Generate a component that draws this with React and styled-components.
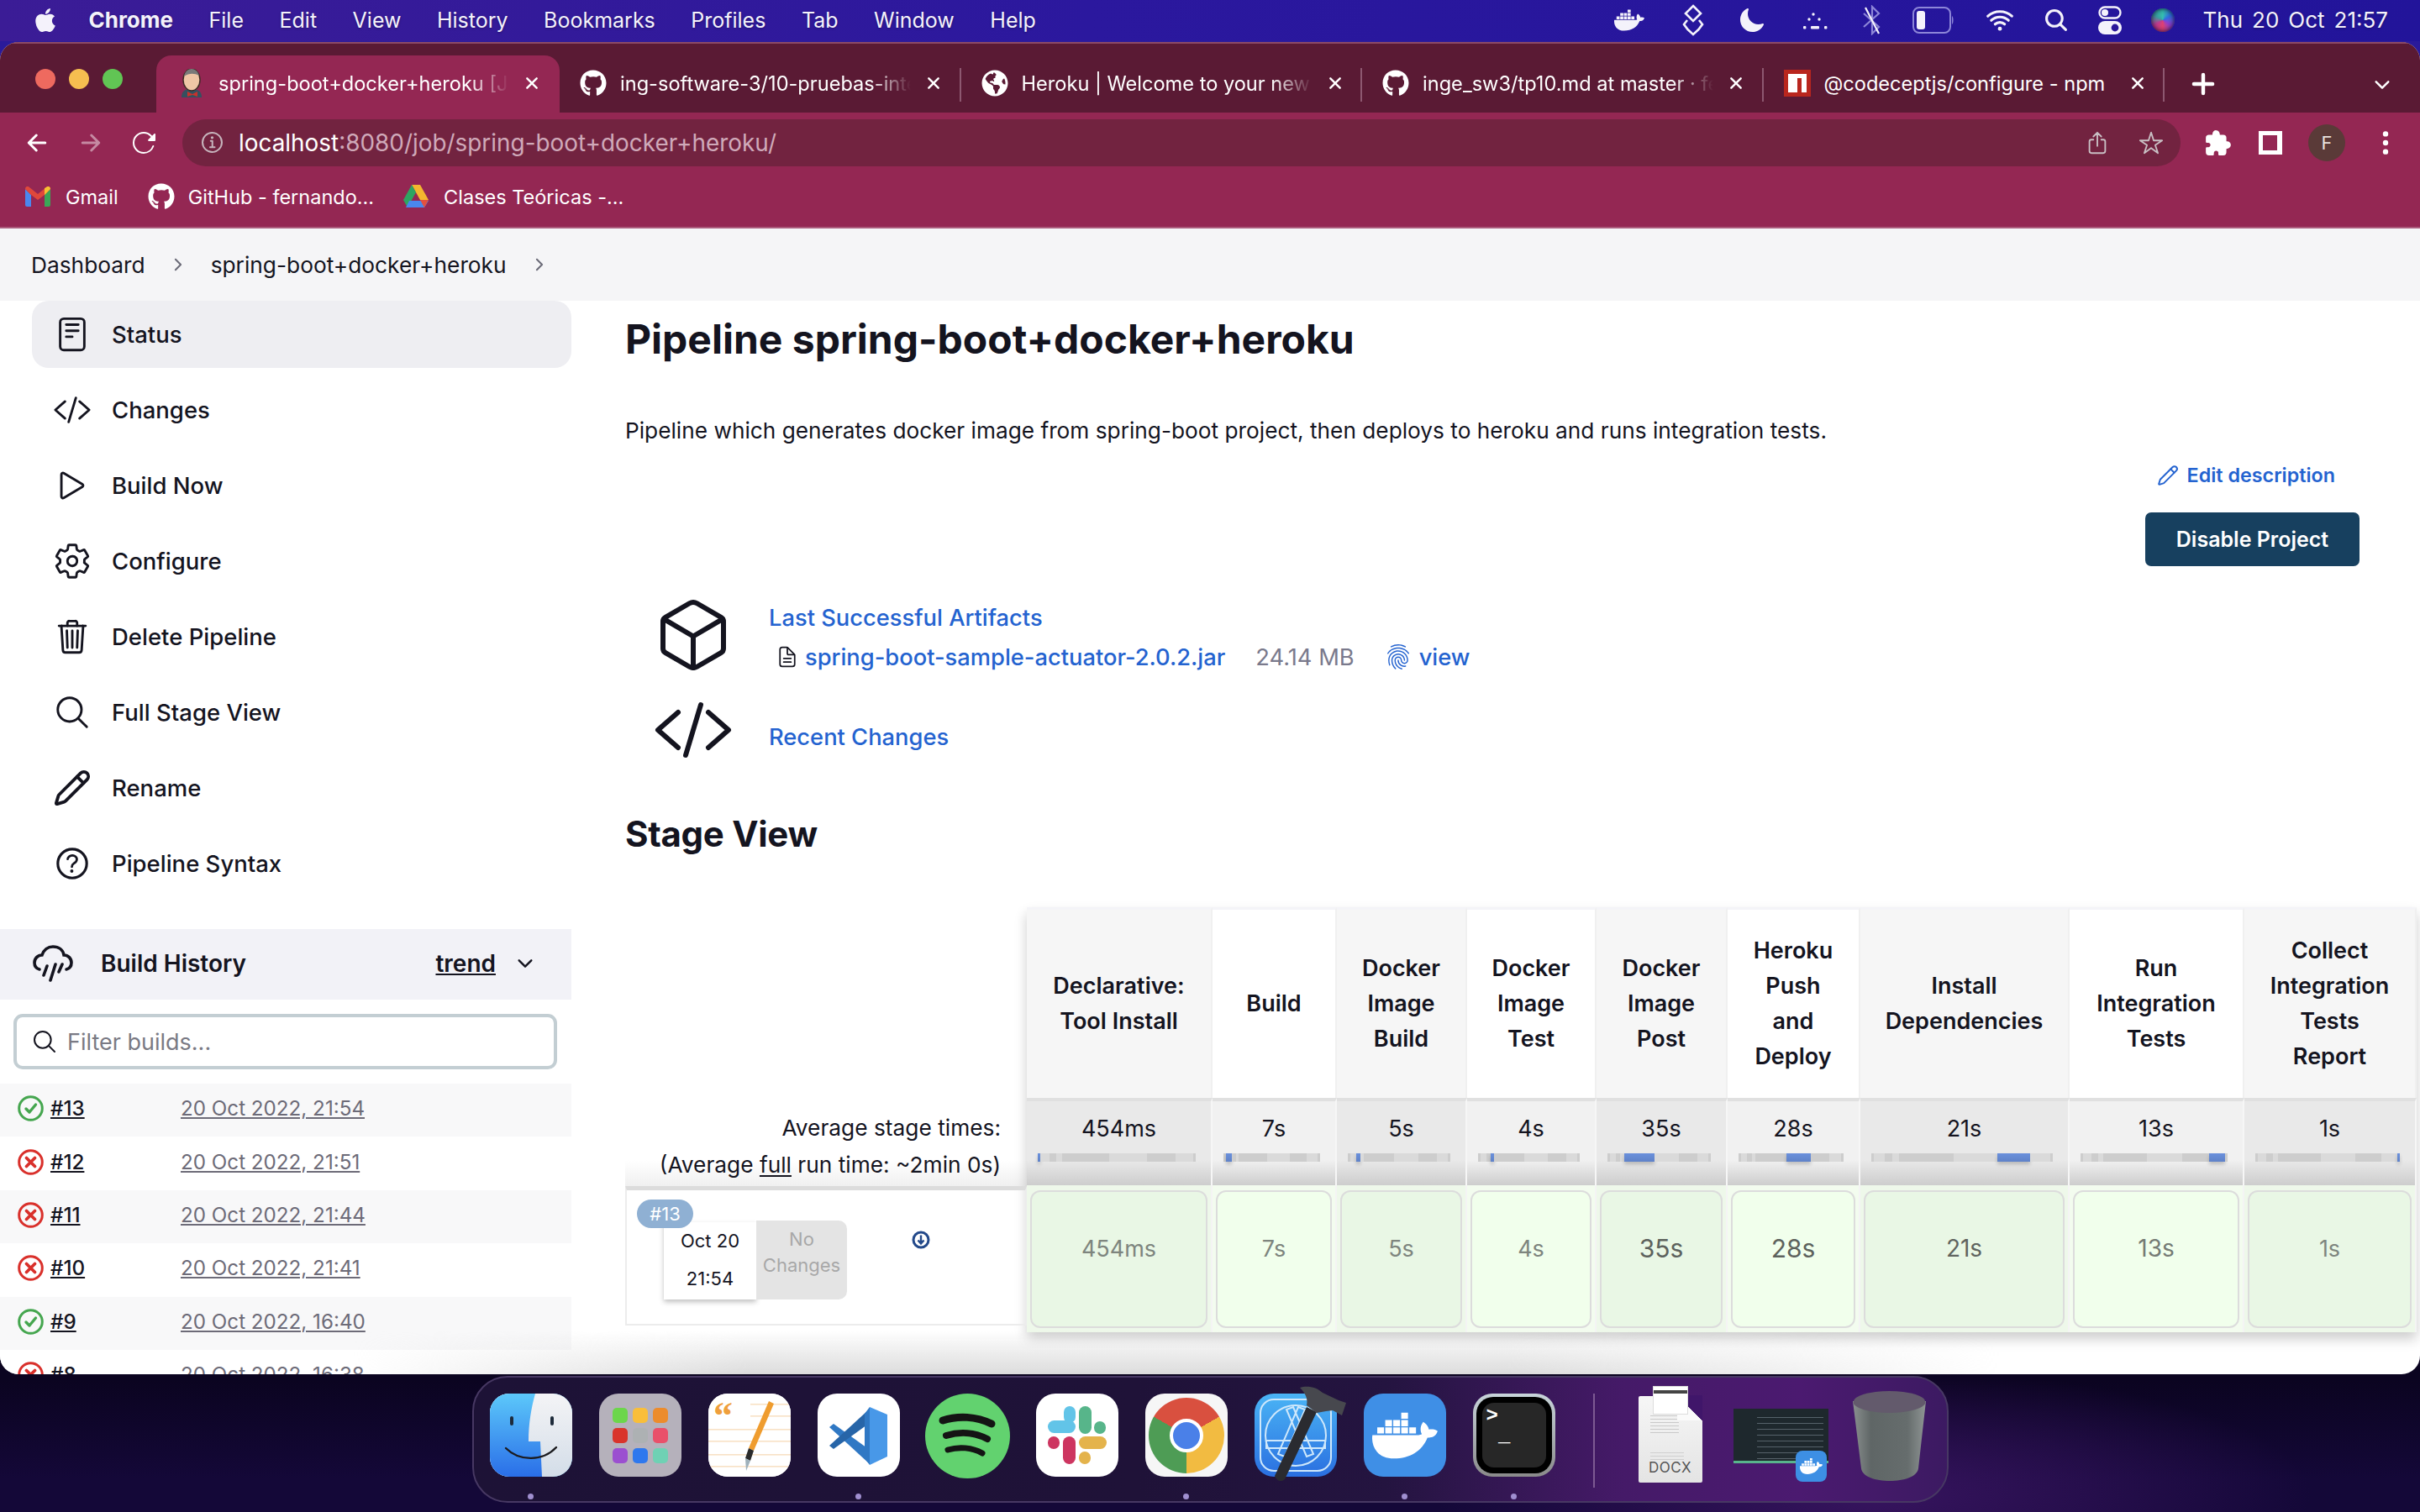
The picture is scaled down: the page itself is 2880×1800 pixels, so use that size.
import styled, { createGlobalStyle } from "styled-components";
import { Pencil, Plus } from "lucide-react";
import { FaApple, FaDocker, FaGithub, FaGlobeAmericas } from "react-icons/fa";
import {
  IoArrowBack, IoArrowForward, IoChevronDown, IoChevronForward, IoClose,
  IoCodeSlashOutline, IoCubeOutline, IoDocumentTextOutline, IoExtensionPuzzle, IoEllipsisVertical,
  IoFingerPrintOutline, IoHelpCircleOutline, IoInformationCircleOutline, IoMoon,
  IoPlayOutline, IoReaderOutline, IoReload, IoSearch, IoSearchOutline,
  IoSettingsOutline, IoShareOutline, IoStarOutline, IoTrashOutline, IoWifi,
} from "react-icons/io5";

const Global = createGlobalStyle`
  html, body { margin: 0; padding: 0; background: #0a0420; }
  * { box-sizing: border-box; }
  body { font-family: Inter, "Liberation Sans", sans-serif; }
`;

const Screen = styled.div`
  width: 2880px;
  height: 1800px;
  overflow: hidden;
  display: flex;
  flex-direction: column;
  background:
    linear-gradient(#2a1a9a 0 80px, transparent 80px),
    radial-gradient(520px 150px at 2230px 1780px, #37145f, transparent),
    linear-gradient(#0b0420 1640px, #140838 1760px);
`;

/* mac menu bar */
const MenuBar = styled.div`
  height: 49px;
  flex: none;
  display: flex;
  align-items: center;
  padding: 0 38px 2px 38px;
  color: #f4f2fb;
  background: linear-gradient(90deg, #3b1c96, #2b189e 45%, #22149a);
  font-size: 25px;
  text-shadow: 0 1px 3px rgba(0, 0, 0, 0.3);
`;
const MenuLeft = styled.div`
  display: flex;
  align-items: center;
  gap: 42.5px;
`;
const AppName = styled.span`
  font-weight: 700;
  margin-left: -7px;
  font-size: 26px;
`;
const MenuRight = styled.div`
  margin-left: auto;
  display: flex;
  align-items: center;
`;
const StatusSlot = styled.span`
  display: flex;
  align-items: center;
  margin-left: ${(p) => p.$ml}px;
`;
const Clock = styled.span`
  white-space: nowrap;
  word-spacing: 3.7px;
  font-size: 26px;
  margin-left: 33px;
`;
const Siri = styled.span`
  width: 28px;
  height: 28px;
  margin-left: 35px;
  border-radius: 50%;
  background: conic-gradient(#35c2b0, #2f6fe0, #8d3fd0, #e0426f, #c03a90, #3aa0a0, #35c2b0);
  box-shadow: inset 0 0 6px #0c0a30;
`;

/* browser window */
const Window = styled.div`
  position: relative;
  height: 1586px;
  flex: none;
  margin-top: 1px;
  border-radius: 22px;
  overflow: hidden;
  display: flex;
  flex-direction: column;
  background: #fff;
  &::after {
    content: "";
    position: absolute;
    left: 420px;
    right: 500px;
    bottom: 0;
    height: 52px;
    background: linear-gradient(rgba(215, 215, 215, 0), #dcdcdc);
    mask-image: linear-gradient(90deg, transparent, #000 24%, #000 70%, transparent);
    pointer-events: none;
  }
`;
const TabStrip = styled.div`
  height: 84px;
  flex: none;
  display: flex;
  align-items: flex-end;
  background: #5a1a34;
  border-top: 2px solid #8c4a66;
  color: #fff;
`;
const Lights = styled.div`
  width: 186px;
  height: 100%;
  display: flex;
  gap: 16px;
  padding: 30px 0 0 42px;
`;
const Light = styled.span`
  width: 24px;
  height: 24px;
  border-radius: 50%;
  background: ${(p) => p.$color};
`;
const Tab = styled.div`
  position: relative;
  width: ${(p) => (p.$active ? "480px" : "477.5px")};
  height: 68px;
  display: flex;
  align-items: center;
  padding: 0 0 2px ${(p) => (p.$active ? "26px" : "24px")};
  background: ${(p) => (p.$active ? "#942753" : "transparent")};
  border-radius: 18px 18px 0 0;
  font-size: 23.6px;
  &::after {
    content: "";
    display: ${(p) => (p.$sep ? "block" : "none")};
    position: absolute;
    right: 0;
    top: 15px;
    height: 40px;
    width: 2px;
    background: #8d5870;
  }
`;
const TabIcon = styled.span`
  width: 32px;
  height: 32px;
  flex: none;
  display: flex;
  align-items: center;
  justify-content: center;
  font-size: 32px;
`;
const TabTitle = styled.span`
  flex: none;
  width: 346px;
  margin-left: 16px;
  white-space: nowrap;
  overflow: hidden;
  mask-image: ${(p) => (p.$fade ? "linear-gradient(90deg, #000 86%, transparent)" : "none")};
`;
const TabClose = styled.span`
  display: flex;
  margin-left: 14px;
  font-size: 26px;
`;
const NewTab = styled.span`
  display: flex;
  margin-left: 27px;
  margin-bottom: 15px;
`;
const TabMenu = styled.span`
  display: flex;
  margin-left: auto;
  margin-right: 32px;
  margin-bottom: 20px;
  font-size: 26px;
`;
const Toolbar = styled.div`
  height: 72px;
  flex: none;
  display: flex;
  align-items: flex-start;
  padding: 8px 24px 0 28px;
  background: #942753;
  color: #fff;
`;
const NavButton = styled.span`
  width: 32px;
  height: 56px;
  margin-right: 32px;
  display: flex;
  align-items: center;
  justify-content: center;
  font-size: 34px;
  color: ${(p) => (p.$dim ? "#c58aa2" : "#fff")};
`;
const AddressBar = styled.div`
  width: 2382px;
  height: 56px;
  margin-left: -3px;
  border-radius: 28px;
  background: #722340;
  display: flex;
  align-items: center;
  padding: 0 20px 0 20px;
  font-size: 27.9px;
  color: #cfa9b9;
`;
const SiteInfo = styled.span`
  display: flex;
  font-size: 32px;
  color: #c6b4bc;
  margin-right: 15px;
`;
const Host = styled.span`
  color: #fff;
`;
const AddressActions = styled.div`
  margin-left: auto;
  display: flex;
  align-items: center;
  gap: 34px;
  font-size: 30px;
  color: #c9c0c4;
`;
const ToolActions = styled.div`
  display: flex;
  align-items: center;
  height: 56px;
  margin-left: 28px;
  gap: 31px;
  font-size: 34px;
`;
const SidePanel = styled.span`
  width: 28px;
  height: 28px;
  border: 5px solid #fff;
  border-left-width: 5px;
  border-right-width: 6px;
`;
const Avatar = styled.span`
  width: 44px;
  height: 44px;
  border-radius: 50%;
  background: #5a3a38;
  color: #e8e0dc;
  font-size: 22px;
  display: flex;
  align-items: center;
  justify-content: center;
`;
const Bookmarks = styled.div`
  height: 66px;
  flex: none;
  display: flex;
  align-items: center;
  padding: 0 0 8px 30px;
  background: #942753;
  border-bottom: 2px solid #ab5c7c;
  color: #fff;
  font-size: 23.5px;
`;
const Bookmark = styled.span`
  display: flex;
  align-items: center;
  gap: ${(p) => p.$gap || 18}px;
  margin-right: ${(p) => p.$mr}px;
  svg { flex: none; }
`;

/* jenkins */
const Crumbs = styled.div`
  height: 86px;
  flex: none;
  display: flex;
  align-items: center;
  padding-left: 37px;
  background: #f5f5f7;
  color: #14141f;
  font-size: 26.3px;
`;
const CrumbArrow = styled.span`
  display: flex;
  margin: 0 28px;
  font-size: 22px;
  color: #6b6b78;
`;
const Body = styled.div`
  flex: 1;
  min-height: 0;
  display: flex;
`;
const Sidebar = styled.aside`
  width: 680px;
  flex: none;
  color: #14141f;
`;
const TaskList = styled.nav`
  display: flex;
  flex-direction: column;
  gap: 10px;
  padding-left: 38px;
  margin-bottom: 38px;
`;
const Task = styled.a`
  height: 80px;
  display: flex;
  align-items: center;
  gap: 24px;
  padding-left: 25px;
  border-radius: 20px;
  font-size: 27.5px;
  font-weight: 500;
  background: ${(p) => (p.$active ? "#eeeef2" : "transparent")};
  svg { flex: none; width: 46px; height: 46px; }
  &:last-child svg { width: 50px; height: 50px; margin: 0 -2px; }
`;
const HistoryHead = styled.div`
  height: 84px;
  display: flex;
  align-items: center;
  padding: 0 0 2px 39px;
  background: #f2f2f7;
  font-size: 28px;
  font-weight: 600;
  svg { flex: none; }
`;
const HistoryTitle = styled.span`
  margin-left: 33px;
`;
const Trend = styled.a`
  margin-left: auto;
  text-decoration: underline;
  margin-right: 22px;
`;
const HistoryToggle = styled.span`
  display: flex;
  margin-right: 42px;
`;
const FilterBox = styled.div`
  height: 66px;
  margin: 17px 17px 17px 16px;
  border: 4px solid #c3ced3;
  border-radius: 11px;
  display: flex;
  align-items: center;
  gap: 11px;
  padding-left: 17px;
  font-size: 27px;
  color: #7a7a84;
  svg { color: #14141f; }
`;
const BuildRow = styled.div`
  height: 63.4px;
  display: flex;
  align-items: center;
  padding: 0 0 4px 21px;
  background: ${(p) => (p.$odd ? "#f8f8f9" : "#fff")};
  font-size: 24.2px;
  svg { flex: none; }
`;
const BuildNum = styled.a`
  width: 155px;
  margin-left: 8px;
  font-weight: 500;
  text-decoration: underline;
`;
const BuildDate = styled.a`
  color: #6d6b78;
  text-decoration: underline;
`;
const Main = styled.main`
  flex: 1;
  min-width: 0;
  padding: 16px 72px 0 64px;
  display: flex;
  flex-direction: column;
  color: #14141f;
`;
const Title = styled.h1`
  margin: 0;
  font-size: 48px;
  line-height: 60px;
  font-weight: 700;
`;
const Description = styled.p`
  margin: 61px 0 0;
  font-size: 26.25px;
  line-height: 36px;
`;
const EditLink = styled.a`
  margin: 17px 29px 0 0;
  align-self: flex-end;
  display: flex;
  align-items: center;
  gap: 10px;
  font-size: 23.3px;
  line-height: 36px;
  font-weight: 600;
  color: #2463d0;
`;
const DisableButton = styled.button`
  align-self: flex-end;
  width: 255px;
  height: 64px;
  margin-top: 26px;
  border: 0;
  border-radius: 7px;
  background: #17405f;
  color: #fff;
  font: 600 25px Inter, sans-serif;
`;
const Links = styled.div`
  margin-top: 39px;
  display: grid;
  grid-template-columns: 96px 1fr;
  column-gap: 42px;
  margin-left: 33px;
`;
const BigIcon = styled.span`
  display: flex;
  align-items: center;
  justify-content: center;
  height: ${(p) => p.$h}px;
`;
const LinkStack = styled.div`
  display: flex;
  flex-direction: column;
  justify-content: ${(p) => (p.$center ? "flex-end" : "flex-start")};
  padding-bottom: ${(p) => (p.$center ? "35px" : "0")};
  font-size: 27.3px;
  font-weight: 500;
  color: #2463d0;
`;
const LinkLine = styled.div`
  height: 44px;
  display: flex;
  align-items: center;
`;
const FileLine = styled(LinkLine)`
  margin-top: 3px;
  padding-left: 8px;
`;
const FileName = styled.span`
  margin-left: 7px;
`;
const FileSize = styled.span`
  margin: 0 36px 0 36px;
  font-weight: 400;
  color: #7a7a8c;
`;
const ViewLink = styled.span`
  margin-left: 9px;
`;
const SectionTitle = styled.h2`
  margin: 31px 0 0;
  font-size: 42px;
  line-height: 56px;
  font-weight: 700;
  letter-spacing: -0.3px;
`;
const Stage = styled.section`
  margin: 59px -68px 0 0;
  display: flex;
`;
const StageLeft = styled.div`
  width: 478px;
  flex: none;
  padding-top: 228px;
`;
const Averages = styled.div`
  height: 104px;
  padding: 13px 31px 0 0;
  text-align: right;
  font-size: 26.3px;
  line-height: 44px;
  background: linear-gradient(#fff 70%, #f0f0f0);
`;
const FullRun = styled.u`
  text-underline-offset: 3px;
`;
const BuildBox = styled.div`
  height: 166px;
  border: 2px solid #ececec;
  border-top: 5px solid #dcdcdc;
  position: relative;
  display: flex;
  padding: 38px 0 0 44px;
`;
const BuildBadge = styled.span`
  position: absolute;
  left: 12px;
  top: 11px;
  width: 67px;
  height: 34px;
  border-radius: 17px;
  background: #8fb0d3;
  color: #fff;
  font-size: 22px;
  display: flex;
  align-items: center;
  justify-content: center;
`;
const DateCard = styled.div`
  width: 110px;
  height: 92px;
  background: #fff;
  box-shadow: 0 3px 6px rgba(0, 0, 0, 0.25);
  font-size: 22px;
  line-height: 45px;
  text-align: center;
`;
const NoChanges = styled.div`
  width: 108px;
  height: 94px;
  margin-top: -2px;
  padding-top: 7px;
  border-radius: 0 10px 10px 0;
  background: #e4e4e4;
  color: #a8a8a8;
  font-size: 22px;
  line-height: 31px;
  text-align: center;
`;
const DownIcon = styled.span`
  display: flex;
  margin: 10px 0 0 77px;
  height: 24px;
`;
const StageGrid = styled.div`
  flex: none;
  height: 506px;
  display: grid;
  grid-template-columns: ${(p) => p.$tracks};
  grid-template-rows: 227px 104px 175px;
  background: #f4f4f8;
  box-shadow: 0 8px 14px rgba(0, 0, 0, 0.2);
`;
const HeadCell = styled.div`
  display: flex;
  align-items: center;
  justify-content: center;
  text-align: center;
  white-space: pre-line;
  font-size: 27px;
  line-height: 42px;
  font-weight: 600;
  background: ${(p) => (p.$odd ? "#f6f6f6" : "#fff")};
  border-right: 2px solid #f0f0f0;
  border-top: 3px solid #f4f4f8;
`;
const AvgCell = styled.div`
  display: flex;
  flex-direction: column;
  align-items: center;
  padding: 14px 18px 0 13px;
  border-top: 4px solid #e0e0e0;
  border-right: 2px solid #f6f6f6;
  font-size: 27px;
  line-height: 38px;
  background: linear-gradient(${(p) => (p.$odd ? "#e9e9e9" : "#f1f1f1")} 70%, #cdcdcd);
`;
const AvgText = styled.span`
  margin-left: 5px;
`;
const MiniBar = styled.div`
  width: 100%;
  height: 10px;
  margin-top: 10px;
  display: flex;
  background: #d6d6d6;
`;
const MiniPart = styled.span`
  flex: ${(p) => p.$grow} 0 0;
  background: ${(p) => (p.$on ? "linear-gradient(#6a90dc, #5f82c8)" : p.$alt ? "#cdcdcd" : "#dadada")};
  box-shadow: ${(p) => (p.$on ? "0 3px 4px rgba(0,0,0,.2)" : "none")};
  min-width: 3px;
`;
const ResultCell = styled.div`
  padding: 6px 4px 5px;
  background: ${(p) => (p.$odd ? "#eef8ea" : "#f3fcef")};
  border-right: 2px solid #f4f4f4;
`;
const ResultCard = styled.div`
  height: 100%;
  display: flex;
  align-items: center;
  justify-content: center;
  padding-bottom: 26px;
  border: 2px solid #dcdcdc;
  border-radius: 12px;
  background: ${(p) => (p.$odd ? "#e9f7e5" : "#f1ffec")};
  color: ${(p) => p.$ink};
  font-size: ${(p) => p.$size}px;
`;

/* dock */
const DockWrap = styled.div`
  flex: 1;
  display: flex;
  justify-content: center;
  padding-top: 2px;
`;
const Dock = styled.div`
  width: 1757px;
  height: 151px;
  display: flex;
  align-items: flex-start;
  padding: 19px 0 0 19px;
  border: 2px solid #473863;
  border-radius: 42px;
  background: linear-gradient(90deg, #1d1236, #1f1238 45%, #241440 62%, #451a68 78%, #4b1a70 90%, #3c1a62);
`;
const DockItem = styled.div`
  width: ${(p) => p.$w || 98}px;
  margin: ${(p) => p.$top || 0}px ${(p) => p.$mr ?? 32}px 0 0;
  flex: none;
  display: flex;
  flex-direction: column;
  align-items: center;
`;
const Dot = styled.span`
  width: 7px;
  height: 7px;
  margin-top: 20px;
  border-radius: 50%;
  background: #a08fd0;
`;
const Tile = styled.div`
  width: 98px;
  height: 99px;
  border-radius: 23px;
  overflow: hidden;
  position: relative;
  background: ${(p) => p.$bg || "#fff"};
  display: flex;
  align-items: center;
  justify-content: center;
  color: #fff;
`;
const AppGrid = styled.div`
  display: grid;
  grid-template-columns: repeat(3, 18px);
  grid-auto-rows: 18px;
  gap: 6px 6px;
`;
const AppSquare = styled.span`
  border-radius: 5px;
  background: ${(p) => p.$c};
`;
const ChromeLogo = styled.div`
  width: 90px;
  height: 90px;
  border-radius: 50%;
  background: conic-gradient(from -60deg, #d9503f 0 120deg, #f2bb41 120deg 240deg, #4e9c55 240deg);
  display: flex;
  align-items: center;
  justify-content: center;
`;
const ChromeEye = styled.span`
  width: 40px;
  height: 40px;
  border-radius: 50%;
  border: 4px solid #fff;
  background: #4a80e8;
`;
const TerminalTile = styled(Tile)`
  background: linear-gradient(#c8d4da, #8a8a8a);
  padding: 4px;
`;
const TerminalScreen = styled.div`
  width: 100%;
  height: 100%;
  border-radius: 20px;
  background: #000;
  padding: 7px;
`;
const TerminalInner = styled.div`
  width: 100%;
  height: 100%;
  border-radius: 14px;
  background: #272727;
  color: #fff;
  font: 700 24px/24px "Liberation Mono", monospace;
  padding: 4px 0 0 5px;
`;
const Separator = styled.span`
  width: 2px;
  height: 112px;
  flex: none;
  margin: 0 52px 0 45px;
  background: #7d5a92;
`;
const DocStack = styled.div`
  position: relative;
  width: 76px;
  margin-top: 3px;
`;
const DocSheet = styled.div`
  position: absolute;
  top: -12px;
  left: 17px;
  width: 42px;
  height: 34px;
  background: linear-gradient(#fff 4px, #444 4px 8px, #fff 8px);
  border: 1px solid #ddd;
`;
const DocPage = styled.div`
  position: relative;
  height: 103px;
  border-radius: 2px;
  padding-top: 75px;
  background:
    repeating-linear-gradient(#fff0 0 3px, #c9c9c9 3px 4px) 14px 20px / 34px 26px no-repeat,
    repeating-linear-gradient(#fff0 0 3px, #cfcfcf 3px 4px) 14px 64px / 40px 12px no-repeat,
    linear-gradient(#f6f6f6, #e4e4e4);
  color: #555;
  font-size: 17px;
  text-align: center;
  letter-spacing: 0.5px;
`;
const DocFold = styled.span`
  position: absolute;
  top: -1px;
  right: 0;
  width: 30px;
  height: 30px;
  background: linear-gradient(225deg, #40166a 50%, #fafafa 51%);
`;
const ThumbWrap = styled.div`
  position: relative;
  width: 113px;
  margin-top: 18px;
`;
const Thumb = styled.div`
  height: 65px;
  padding: 4px 6px 0 28px;
  background: #1e282d;
  border-bottom: 3px solid #58b48c;
`;
const ThumbLines = styled.div`
  height: 100%;
  background: repeating-linear-gradient(#1e282d 0 6px, #56626a 6px 7px);
`;
const ThumbBadge = styled.div`
  position: absolute;
  right: 2px;
  top: 50px;
  width: 37px;
  height: 37px;
  border-radius: 8px;
  background: #3d8fe4;
  color: #fff;
  display: flex;
  align-items: center;
  justify-content: center;
  font-size: 27px;
`;

const Jenkins = () => (
  <svg width="32" height="34" viewBox="0 0 32 34">
    <path d="M4 34c0-7 4-10 10-10l8 1c4 1 6 4 6 9z" fill="#34505f" />
    <ellipse cx="16" cy="13" rx="10" ry="13" fill="#efc6a6" stroke="#3a2a22" strokeWidth="1.4" />
    <path d="M7 9c1-6 5-9 9-9s8 3 9 8c-6-3-12-3-18 1z" fill="#7a7a7a" />
    <path d="M11 27l6 3 6-3v6l-6-2-6 2z" fill="#c8322b" />
  </svg>
);
const Npm = () => (
  <svg width="32" height="32" viewBox="0 0 32 32">
    <rect width="32" height="32" fill="#b9261e" />
    <path d="M5 5h22v22h-6V10h-5v17H5z" fill="#fff" />
  </svg>
);
const Gmail = () => (
  <svg width="30" height="24" viewBox="0 0 30 24">
    <path d="M0 3v19a2 2 0 0 0 2 2h5V10z" fill="#4a87ee" />
    <path d="M30 3v19a2 2 0 0 1-2 2h-5V10z" fill="#3aa757" />
    <path d="M0 3c0-3 3-4 5-2l10 8 10-8c2-2 5-1 5 2l-7 7-8 6-8-6z" fill="#e0483b" />
    <path d="M23 2l2-1c2-2 5-1 5 2l-7 7z" fill="#f7c133" />
  </svg>
);
const Drive = () => (
  <svg width="30" height="30" viewBox="0 0 30 30">
    <path d="M10 1h10l10 18H20z" fill="#f4b72f" />
    <path d="M10 1l5 9L5 28 0 19z" fill="#2ea561" />
    <path d="M7 20h23l-5 8H3z" fill="#4a87ee" />
    <path d="M20 19h10l-5 9z" fill="#e4503d" />
  </svg>
);
const StackedDiamonds = () => (
  <svg width="28" height="38" viewBox="0 0 28 38" fill="none" stroke="#f4f2fb" strokeWidth="2.6">
    <path d="M14 2l9 9-9 9-9-9zM7 19l-4 5c3 5 7 9 11 12 4-3 8-7 11-12l-4-5" />
  </svg>
);
const DotsMenu = () => (
  <svg width="32" height="26" viewBox="0 0 32 26" fill="#f4f2fb">
    <circle cx="14" cy="6" r="1.7" /><circle cx="9" cy="12" r="1.7" /><circle cx="21" cy="12" r="1.7" />
    <rect x="2" y="20" width="3.4" height="3.4" rx="1" /><rect x="11" y="20" width="10" height="3.4" rx="1" />
    <rect x="27" y="20" width="3.4" height="3.4" rx="1" />
  </svg>
);
const BluetoothOff = () => (
  <svg width="26" height="36" viewBox="0 0 26 36" fill="none" strokeWidth="2.2">
    <path d="M3 10l18 16-8 8V2l8 8-18 16" stroke="#8d86d8" />
    <path d="M5 3l16 31" stroke="#f4f2fb" />
  </svg>
);
const Battery = () => (
  <svg width="50" height="32" viewBox="0 0 50 32">
    <rect x="1" y="1" width="44" height="30" rx="7" fill="none" stroke="#8d86d8" strokeWidth="2" />
    <rect x="5" y="5" width="10" height="22" rx="3" fill="#f4f2fb" />
    <path d="M47 11c2 1 2 9 0 10z" fill="#8d86d8" />
  </svg>
);
const Toggles = () => (
  <svg width="28" height="34" viewBox="0 0 28 34">
    <rect x="1.5" y="1.5" width="25" height="13" rx="6.5" fill="none" stroke="#f4f2fb" strokeWidth="2.4" />
    <circle cx="8" cy="8" r="4" fill="#f4f2fb" />
    <rect y="18" width="28" height="16" rx="8" fill="#f4f2fb" />
    <circle cx="20" cy="26" r="4.4" fill="#2a189a" />
  </svg>
);
const RainCloud = () => (
  <svg width="48" height="44" viewBox="0 0 48 44" fill="none" stroke="#14141f" strokeWidth="3.6" strokeLinecap="round">
    <path d="M8 29C4 28 2 25 2 21c0-5 4-9 9-9 2-6 7-10 13-10 7 0 12 4 13 10 5 0 9 4 9 9 0 4-2 7-6 8" />
    <path d="M13 36l4-11M21 42l6-19M31 32l4-9" />
  </svg>
);
const SuccessIcon = () => (
  <svg width="31" height="31" viewBox="0 0 31 31" fill="none">
    <circle cx="15.5" cy="15.5" r="13.8" stroke="#45a64f" strokeWidth="3" />
    <path d="M10 16l4 4 7.5-9" stroke="#45a64f" strokeWidth="3.4" strokeLinecap="round" strokeLinejoin="round" />
  </svg>
);
const FailIcon = () => (
  <svg width="31" height="31" viewBox="0 0 31 31" fill="none">
    <circle cx="15.5" cy="15.5" r="13.8" stroke="#d9302b" strokeWidth="3" />
    <path d="M10.5 10.5l10 10M20.5 10.5l-10 10" stroke="#d9302b" strokeWidth="3.8" strokeLinecap="round" />
  </svg>
);
const DownCircle = () => (
  <svg width="22" height="22" viewBox="0 0 22 22" fill="none" stroke="#23498a">
    <circle cx="11" cy="11" r="9" strokeWidth="3" />
    <path d="M11 5.5v10M7.5 11.5l3.5 4 3.5-4" strokeWidth="2.4" />
  </svg>
);
const Finder = () => (
  <svg width="98" height="99" viewBox="0 0 98 99">
    <defs>
      <linearGradient id="fb" x1="0" y1="0" x2="0" y2="1"><stop offset="0" stopColor="#5cc8fa" /><stop offset="1" stopColor="#2a6ee8" /></linearGradient>
      <linearGradient id="fg" x1="0" y1="0" x2="0" y2="1"><stop offset="0" stopColor="#f4f4f6" /><stop offset="1" stopColor="#d3dde8" /></linearGradient>
    </defs>
    <rect width="98" height="99" fill="url(#fg)" />
    <path d="M0 0h54c-5 18-8 36-8 57h14l2 42H0z" fill="url(#fb)" />
    <rect x="24" y="27" width="4" height="11" rx="2" fill="#1d2a3a" /><rect x="72" y="27" width="4" height="11" rx="2" fill="#1d2a3a" />
    <path d="M19 65c16 16 44 16 60-1" fill="none" stroke="#1b1b1f" strokeWidth="2.4" strokeLinecap="round" />
  </svg>
);
const Pages = () => (
  <svg width="98" height="99" viewBox="0 0 98 99">
    <rect width="98" height="99" fill="#fff" />
    {[12, 26, 42, 56, 72, 86].map((y) => <rect key={y} x={y < 30 ? 50 : 0} y={y} width="98" height="1.6" fill="#f8e2c6" />)}
    <text x="6" y="42" fontFamily="Liberation Serif, serif" fontSize="46" fontWeight="700" fill="#ef9f3c">“</text>
    <path d="M72 9l6 3-24 56-6-3z" fill="#ef9c2e" />
    <path d="M48 65l6 3-4 12-6-3z" fill="#2b2b2b" />
    <path d="M44 77l6 3-5 12z" fill="#9fb1bb" />
  </svg>
);
const VsCode = () => (
  <svg width="98" height="99" viewBox="0 0 98 99">
    <path d="M14 40l5-4 47 34-5 13z" fill="#2f78c4" />
    <path d="M14 62l5 4 47-34-5-13z" fill="#2765a8" />
    <path d="M62 16l21 9v50l-21 10z" fill="#4898e8" />
    <path d="M62 16v69l-6-8V24z" fill="#2f78c4" />
  </svg>
);
const Spotify = () => (
  <svg width="101" height="101" viewBox="0 0 101 101" fill="none" stroke="#141414" strokeLinecap="round">
    <circle cx="50.5" cy="50.5" r="50.5" fill="#62d26f" stroke="none" />
    <path d="M21 32c18-6 40-5 58 4" strokeWidth="9" />
    <path d="M25 50c16-5 34-4 49 4" strokeWidth="8" />
    <path d="M27 67c13-4 29-3 41 4" strokeWidth="7" />
  </svg>
);
const Slack = () => (
  <svg width="98" height="99" viewBox="0 0 98 99">
    <rect x="33" y="15" width="14" height="20" rx="7" fill="#62c4e8" /><rect x="14" y="32" width="33" height="15" rx="7.5" fill="#62c4e8" />
    <rect x="51" y="15" width="15" height="33" rx="7.5" fill="#57b58a" /><rect x="69" y="33" width="14" height="15" rx="7" fill="#57b58a" />
    <rect x="14" y="51" width="14" height="15" rx="7" fill="#cd3560" /><rect x="32" y="51" width="15" height="33" rx="7.5" fill="#cd3560" />
    <rect x="51" y="51" width="33" height="15" rx="7.5" fill="#e4b34b" /><rect x="51" y="69" width="14" height="15" rx="7" fill="#e4b34b" />
  </svg>
);
const HammerSvg = styled.svg`
  overflow: visible;
`;
const Xcode = () => (
  <HammerSvg width="98" height="99" viewBox="0 0 98 99">
    <defs><linearGradient id="xb" x1="0" y1="0" x2="0" y2="1"><stop offset="0" stopColor="#4ab4f5" /><stop offset="1" stopColor="#2a6fe0" /></linearGradient></defs>
    <rect width="98" height="99" rx="23" fill="url(#xb)" />
    <g fill="none" stroke="#cfe8fb" strokeWidth="2">
      <rect x="7" y="7" width="84" height="85" rx="16" />
      <circle cx="49" cy="50" r="36" />
      <path d="M28 72l24-56 8 3-24 56zM70 72L46 16l-8 3 24 56zM14 56h70v9H14z" />
    </g>
    <path d="M24 98c2 6 8 8 12 4l38-80-12-6z" fill="#2a2b30" />
    <path d="M54 -7c8-3 20-1 27 6l19 9 9 3-5 15-11-6-8 1-11 2-12-9c2-8-2-15-8-21z" fill="#47484e" />
  </HammerSvg>
);
const Trash = () => (
  <svg width="87" height="108" viewBox="0 0 87 108">
    <defs><linearGradient id="tg" x1="0" y1="0" x2="1" y2="0"><stop offset="0" stopColor="#8a908f" /><stop offset="0.25" stopColor="#5f6666" /><stop offset="0.75" stopColor="#666d6d" /><stop offset="1" stopColor="#8f9594" /></linearGradient></defs>
    <path d="M0 13l10 80c2 20 66 20 68 0l9-80z" fill="url(#tg)" />
    <ellipse cx="43.5" cy="14" rx="43" ry="13" fill="#635a6c" />
  </svg>
);

const STAGES = [
  { name: "Declarative:\nTool Install", time: "454ms", secs: 0.454, w: 221, size: 27, ink: "#7e857e" },
  { name: "Build", time: "7s", secs: 7, w: 148, size: 27, ink: "#7e857e" },
  { name: "Docker\nImage\nBuild", time: "5s", secs: 5, w: 155, size: 27, ink: "#7e857e" },
  { name: "Docker\nImage\nTest", time: "4s", secs: 4, w: 154, size: 27, ink: "#7e857e" },
  { name: "Docker\nImage\nPost", time: "35s", secs: 35, w: 156, size: 30, ink: "#5d625d" },
  { name: "Heroku\nPush\nand\nDeploy", time: "28s", secs: 28, w: 158, size: 30, ink: "#5d625d" },
  { name: "Install\nDependencies", time: "21s", secs: 21, w: 249, size: 28, ink: "#5f645f" },
  { name: "Run\nIntegration\nTests", time: "13s", secs: 13, w: 208, size: 28, ink: "#757b75" },
  { name: "Collect\nIntegration\nTests\nReport", time: "1s", secs: 1, w: 205, size: 27, ink: "#7e857e" },
];
const TASKS = [
  [IoReaderOutline, "Status"], [IoCodeSlashOutline, "Changes"], [IoPlayOutline, "Build Now"],
  [IoSettingsOutline, "Configure"], [IoTrashOutline, "Delete Pipeline"], [IoSearchOutline, "Full Stage View"],
  [Pencil, "Rename"], [IoHelpCircleOutline, "Pipeline Syntax"],
];
const BUILDS = [
  ["#13", "20 Oct 2022, 21:54", true], ["#12", "20 Oct 2022, 21:51", false], ["#11", "20 Oct 2022, 21:44", false],
  ["#10", "20 Oct 2022, 21:41", false], ["#9", "20 Oct 2022, 16:40", true], ["#8", "20 Oct 2022, 16:38", false],
];
const TABS = [
  { icon: <Jenkins />, title: "spring-boot+docker+heroku [Jenkins]", fade: true, active: true },
  { icon: <FaGithub />, title: "ing-software-3/10-pruebas-integracion", fade: true, sep: true },
  { icon: <FaGlobeAmericas />, title: "Heroku | Welcome to your new app!", fade: true, sep: true },
  { icon: <FaGithub />, title: "inge_sw3/tp10.md at master · fernando", fade: true, sep: true },
  { icon: <Npm />, title: "@codeceptjs/configure - npm", sep: true },
];
const LAUNCH = ["#6cd64b", "#f9be3a", "#ec8c2c", "#d9342b", "#adb1b3", "#e9506a", "#9b4fd0", "#2f78ee", "#6fd1b4"];

export default function App() {
  const tracks = STAGES.map((s) => `${s.w}px`).join(" ");
  return (
    <Screen>
      <Global />
      <MenuBar>
        <MenuLeft>
          <FaApple size={32} />
          <AppName>Chrome</AppName>
          {["File", "Edit", "View", "History", "Bookmarks", "Profiles", "Tab", "Window", "Help"].map((m) => <span key={m}>{m}</span>)}
        </MenuLeft>
        <MenuRight>
          <StatusSlot $ml={0}><FaDocker size={36} /></StatusSlot>
          <StatusSlot $ml={44}><StackedDiamonds /></StatusSlot>
          <StatusSlot $ml={40}><IoMoon size={32} /></StatusSlot>
          <StatusSlot $ml={43}><DotsMenu /></StatusSlot>
          <StatusSlot $ml={39}><BluetoothOff /></StatusSlot>
          <StatusSlot $ml={35}><Battery /></StatusSlot>
          <StatusSlot $ml={35}><IoWifi size={38} /></StatusSlot>
          <StatusSlot $ml={32}><IoSearch size={32} /></StatusSlot>
          <StatusSlot $ml={34}><Toggles /></StatusSlot>
          <Siri />
          <Clock>Thu 20 Oct 21:57</Clock>
        </MenuRight>
      </MenuBar>

      <Window>
        <TabStrip>
          <Lights>
            <Light $color="#ee6a5f" /><Light $color="#f6be50" /><Light $color="#61c554" />
          </Lights>
          {TABS.map((t) => (
            <Tab key={t.title} $active={t.active} $sep={t.sep}>
              <TabIcon>{t.icon}</TabIcon>
              <TabTitle $fade={t.fade}>{t.title}</TabTitle>
              <TabClose><IoClose /></TabClose>
            </Tab>
          ))}
          <NewTab><Plus size={38} strokeWidth={2.8} /></NewTab>
          <TabMenu><IoChevronDown /></TabMenu>
        </TabStrip>
        <Toolbar>
          <NavButton><IoArrowBack /></NavButton>
          <NavButton $dim><IoArrowForward /></NavButton>
          <NavButton><IoReload /></NavButton>
          <AddressBar>
            <SiteInfo><IoInformationCircleOutline /></SiteInfo>
            <Host>localhost</Host>:8080/job/spring-boot+docker+heroku/
            <AddressActions><IoShareOutline /><IoStarOutline /></AddressActions>
          </AddressBar>
          <ToolActions>
            <IoExtensionPuzzle />
            <SidePanel />
            <Avatar>F</Avatar>
            <IoEllipsisVertical />
          </ToolActions>
        </Toolbar>
        <Bookmarks>
          <Bookmark $mr={35}><Gmail />Gmail</Bookmark>
          <Bookmark $mr={35} $gap={16}><FaGithub size={32} />GitHub - fernando...</Bookmark>
          <Bookmark $mr={0}><Drive />Clases Teóricas -...</Bookmark>
        </Bookmarks>

        <Crumbs>
          Dashboard<CrumbArrow><IoChevronForward /></CrumbArrow>spring-boot+docker+heroku<CrumbArrow><IoChevronForward /></CrumbArrow>
        </Crumbs>
        <Body>
          <Sidebar>
            <TaskList>
              {TASKS.map(([Icon, label], i) => (
                <Task key={label} $active={i === 0}><Icon />{label}</Task>
              ))}
            </TaskList>
            <HistoryHead>
              <RainCloud />
              <HistoryTitle>Build History</HistoryTitle>
              <Trend>trend</Trend>
              <HistoryToggle><IoChevronDown size={26} /></HistoryToggle>
            </HistoryHead>
            <FilterBox><IoSearchOutline size={32} />Filter builds...</FilterBox>
            {BUILDS.map(([num, date, ok], i) => (
              <BuildRow key={num} $odd={i % 2 === 0}>
                {ok ? <SuccessIcon /> : <FailIcon />}
                <BuildNum>{num}</BuildNum>
                <BuildDate>{date}</BuildDate>
              </BuildRow>
            ))}
          </Sidebar>

          <Main>
            <Title>Pipeline spring-boot+docker+heroku</Title>
            <Description>Pipeline which generates docker image from spring-boot project, then deploys to heroku and runs integration tests.</Description>
            <EditLink><Pencil size={26} strokeWidth={1.8} />Edit description</EditLink>
            <DisableButton>Disable Project</DisableButton>
            <Links>
              <BigIcon $h={85}><IoCubeOutline size={96} /></BigIcon>
              <LinkStack>
                <LinkLine>Last Successful Artifacts</LinkLine>
                <FileLine>
                  <IoDocumentTextOutline size={28} color="#14141f" />
                  <FileName>spring-boot-sample-actuator-2.0.2.jar</FileName>
                  <FileSize>24.14 MB</FileSize>
                  <IoFingerPrintOutline size={32} />
                  <ViewLink>view</ViewLink>
                </FileLine>
              </LinkStack>
              <BigIcon $h={130}><IoCodeSlashOutline size={100} /></BigIcon>
              <LinkStack $center><LinkLine>Recent Changes</LinkLine></LinkStack>
            </Links>
            <SectionTitle>Stage View</SectionTitle>
            <Stage>
              <StageLeft>
                <Averages>
                  Average stage times:<br />
                  (Average <FullRun>full</FullRun> run time: ~2min 0s)
                </Averages>
                <BuildBox>
                  <BuildBadge>#13</BuildBadge>
                  <DateCard>Oct 20<br />21:54</DateCard>
                  <NoChanges>No<br />Changes</NoChanges>
                  <DownIcon><DownCircle /></DownIcon>
                </BuildBox>
              </StageLeft>
              <StageGrid $tracks={tracks}>
                {STAGES.map((s, i) => <HeadCell key={s.name} $odd={i % 2 === 0}>{s.name}</HeadCell>)}
                {STAGES.map((s, i) => (
                  <AvgCell key={s.name} $odd={i % 2 === 0}>
                    <AvgText>{s.time}</AvgText>
                    <MiniBar>
                      {STAGES.map((p, j) => <MiniPart key={p.name} $grow={p.secs} $alt={j % 2 === 0} $on={i === j} />)}
                    </MiniBar>
                  </AvgCell>
                ))}
                {STAGES.map((s, i) => (
                  <ResultCell key={s.name} $odd={i % 2 === 0}>
                    <ResultCard $odd={i % 2 === 0} $size={s.size} $ink={s.ink}>{s.time}</ResultCard>
                  </ResultCell>
                ))}
              </StageGrid>
            </Stage>
          </Main>
        </Body>
      </Window>

      <DockWrap>
        <Dock>
          <DockItem><Tile $bg="#5cc8fa"><Finder /></Tile><Dot /></DockItem>
          <DockItem>
            <Tile $bg="#b5b1bb"><AppGrid>{LAUNCH.map((c) => <AppSquare key={c} $c={c} />)}</AppGrid></Tile>
          </DockItem>
          <DockItem><Tile><Pages /></Tile></DockItem>
          <DockItem $mr={30}><Tile><VsCode /></Tile><Dot /></DockItem>
          <DockItem $w={101} $mr={31}><Spotify /></DockItem>
          <DockItem><Tile><Slack /></Tile></DockItem>
          <DockItem><Tile $bg="#f6f6f6"><ChromeLogo><ChromeEye /></ChromeLogo></Tile><Dot /></DockItem>
          <DockItem><Xcode /></DockItem>
          <DockItem><Tile $bg="#3f8fe6"><FaDocker size={78} /></Tile><Dot /></DockItem>
          <DockItem $mr={0}>
            <TerminalTile><TerminalScreen><TerminalInner>{">"}<br />&nbsp;_</TerminalInner></TerminalScreen></TerminalTile>
            <Dot />
          </DockItem>
          <Separator />
          <DockItem $w={76} $mr={37}>
            <DocStack>
              <DocPage>DOCX<DocFold /></DocPage>
              <DocSheet />
            </DocStack>
          </DockItem>
          <DockItem $w={113} $mr={29}>
            <ThumbWrap><Thumb><ThumbLines /></Thumb><ThumbBadge><FaDocker /></ThumbBadge></ThumbWrap>
          </DockItem>
          <DockItem $w={87} $mr={0} $top={-4}><Trash /></DockItem>
        </Dock>
      </DockWrap>
    </Screen>
  );
}
